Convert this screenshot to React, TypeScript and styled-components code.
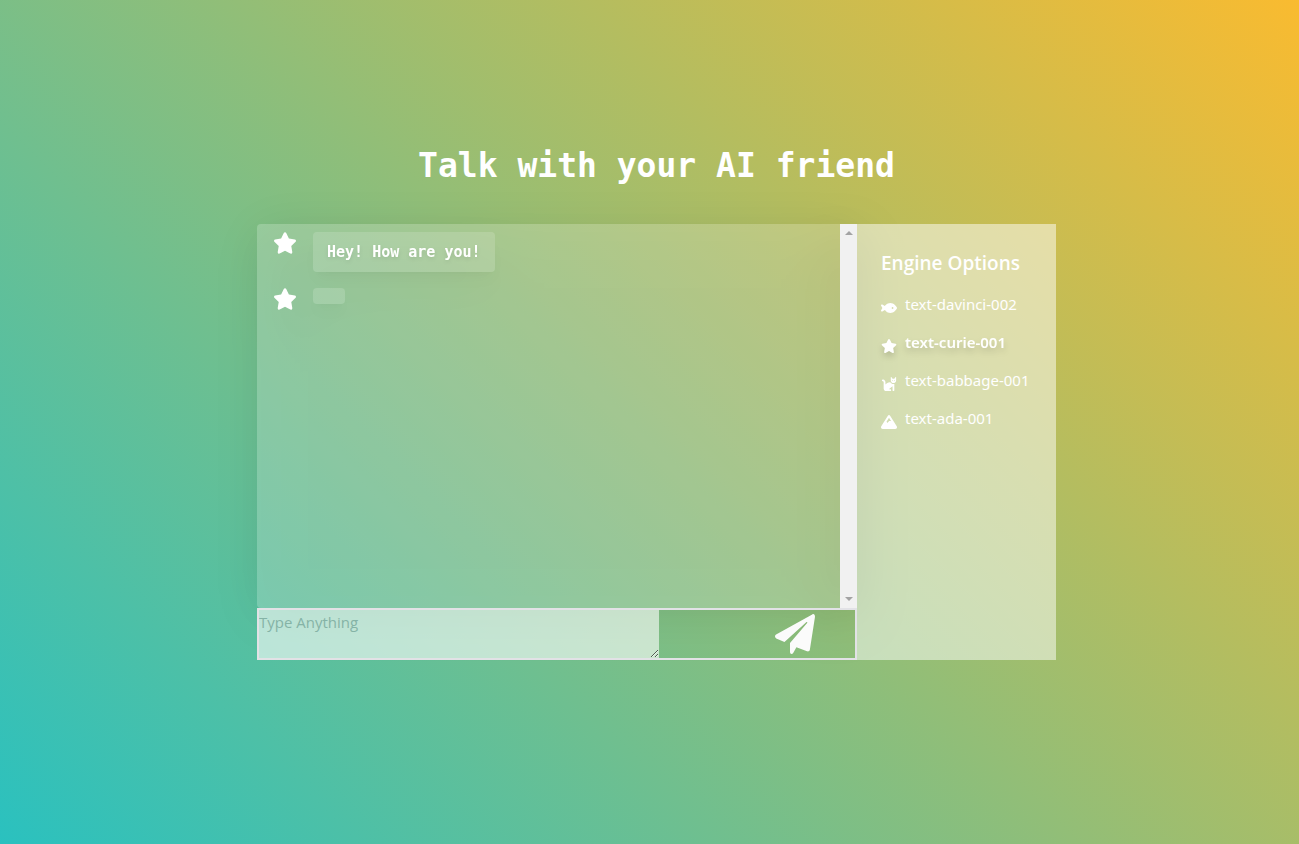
import React, { useState } from "react";
import styled, { createGlobalStyle, css } from "styled-components";
import { FaStar, FaFish, FaCat, FaMountain } from "react-icons/fa6";

const GlobalStyle = createGlobalStyle`
  *, *::before, *::after { box-sizing: border-box; }
  body {
    margin: 0;
    font-family: "Open Sans", "Noto Sans", sans-serif;
    color: #fff;
  }
`;

const Page = styled.main`
  display: flex;
  flex-direction: column;
  align-items: center;
  justify-content: center;
  min-height: 100vh;
  padding: 0 0 40px 14px;
  background: linear-gradient(45deg, rgb(42, 193, 191) 0%, rgb(249, 187, 48) 100%);
`;

const Title = styled.h1`
  margin: 0 0 36px;
  font: 700 33px/44px "DejaVu Sans Mono", monospace;
`;

const Board = styled.div`
  display: flex;
  width: 100%;
  max-width: 799px;
`;

const ChatColumn = styled.section`
  flex: 1;
  display: flex;
  flex-direction: column;
  min-width: 0;
`;

const ChatWindow = styled.div`
  display: flex;
  height: 384px;
  background: rgba(255, 255, 255, 0.2);
  border-radius: 4px 0 0 4px;
  box-shadow: 0 4px 50px rgba(0, 0, 0, 0.06);
  filter: drop-shadow(0 12px 25px rgba(0, 0, 0, 0.15));
`;

const Messages = styled.ul`
  flex: 1;
  display: flex;
  flex-direction: column;
  gap: 16px;
  margin: 0;
  padding: 8px 16px;
  list-style: none;
`;

const Message = styled.li`
  display: flex;
  align-items: flex-start;
  gap: 16px;

  > svg {
    width: 24px;
    height: 22px;
  }
`;

const Bubble = styled.div`
  min-width: 32px;
  min-height: 16px;
  padding: 8px 14px;
  font: 700 15px/24px "DejaVu Sans Mono", monospace;
  text-shadow: 0 2px 4px rgba(0, 0, 0, 0.1);
  background: rgba(255, 255, 255, 0.15);
  border-radius: 4px;
  box-shadow: 0 10px 15px -3px rgba(0, 0, 0, 0.03), 0 4px 6px -4px rgba(0, 0, 0, 0.03);

  &:empty {
    padding: 8px 16px;
  }
`;

const ScrollTrack = styled.div`
  display: flex;
  flex-direction: column;
  justify-content: space-between;
  align-items: center;
  width: 17px;
  padding: 7px 0;
  background: #f1f1f1;
`;

const Arrow = styled.span<{ $down?: boolean }>`
  border: 4px solid transparent;
  ${({ $down }) =>
    $down
      ? css`border-top-color: #a3a3a3; border-bottom-width: 0;`
      : css`border-bottom-color: #a3a3a3; border-top-width: 0;`}
`;

const Composer = styled.form`
  position: relative;
  z-index: 1;
  display: grid;
  grid-template-columns: 400fr 196fr;
  height: 52px;
  border: 2px solid #e2e2e6;
`;

const Prompt = styled.textarea`
  min-width: 0;
  margin: 0;
  padding: 0;
  border: 0;
  outline: 0;
  color: #33655c;
  font: 400 15px/24px "Open Sans", "Noto Sans", sans-serif;
  background: rgba(255, 255, 255, 0.6);

  &::placeholder {
    color: #85b3a6;
    opacity: 1;
  }
`;

const SendButton = styled.button`
  display: flex;
  align-items: center;
  justify-content: flex-end;
  padding: 0 40px 0 0;
  border: 0;
  color: #fbfbfb;
  background: transparent;

  > svg {
    width: 40px;
    height: 40px;
  }
`;

const EnginePanel = styled.aside`
  position: relative;
  z-index: 1;
  flex: 0 0 199px;
  padding: 24px;
  background: rgba(255, 255, 255, 0.5);
`;

const PanelTitle = styled.h2`
  margin: 0 0 14px;
  font-size: 19px;
  font-weight: 600;
  line-height: 30px;
  white-space: nowrap;
`;

const EngineList = styled.div`
  display: flex;
  flex-direction: column;
  gap: 14px;
`;

const EngineOption = styled.button<{ $active: boolean }>`
  display: flex;
  align-items: flex-end;
  gap: 8px;
  padding: 0;
  border: 0;
  background: transparent;
  color: #fff;
  font: ${({ $active }) => ($active ? 600 : 400)} 15px/24px "Noto Sans", "Open Sans", sans-serif;
  white-space: nowrap;
  filter: ${({ $active }) => ($active ? "drop-shadow(0 4px 3px rgba(0, 0, 0, 0.15))" : "none")};

  > svg {
    flex: none;
    width: 16px;
    height: 16px;
  }
`;

const PaperPlane = () => (
  <svg viewBox="0 0 512 512" fill="currentColor" aria-hidden="true">
    <path d="M477 5 14 262C-6 274-4 302 16 312L121 358 400 107C408 99 417 106 411 114L192 371V487C192 512 217 520 231 502L274 426 410 478C428 484 443 474 446 458L511 41C515 12 498-8 477 5Z" />
  </svg>
);

const engines = [
  { name: "text-davinci-002", Icon: FaFish },
  { name: "text-curie-001", Icon: FaStar },
  { name: "text-babbage-001", Icon: FaCat },
  { name: "text-ada-001", Icon: FaMountain },
];

const messages = ["Hey! How are you!", ""];

export default function App() {
  const [engine, setEngine] = useState("text-curie-001");
  return (
    <>
      <GlobalStyle />
      <Page>
        <Title>Talk with your AI friend</Title>
        <Board>
          <ChatColumn>
            <ChatWindow>
              <Messages>
                {messages.map((text, i) => (
                  <Message key={i}>
                    <FaStar />
                    <Bubble>{text}</Bubble>
                  </Message>
                ))}
              </Messages>
              <ScrollTrack aria-hidden="true">
                <Arrow />
                <Arrow $down />
              </ScrollTrack>
            </ChatWindow>
            <Composer onSubmit={(e) => e.preventDefault()}>
              <Prompt aria-label="Message" placeholder="Type Anything" />
              <SendButton type="submit" aria-label="Send">
                <PaperPlane />
              </SendButton>
            </Composer>
          </ChatColumn>
          <EnginePanel>
            <PanelTitle>Engine Options</PanelTitle>
            <EngineList>
              {engines.map(({ name, Icon }) => (
                <EngineOption
                  key={name}
                  type="button"
                  $active={name === engine}
                  onClick={() => setEngine(name)}
                >
                  <Icon />
                  {name}
                </EngineOption>
              ))}
            </EngineList>
          </EnginePanel>
        </Board>
      </Page>
    </>
  );
}
